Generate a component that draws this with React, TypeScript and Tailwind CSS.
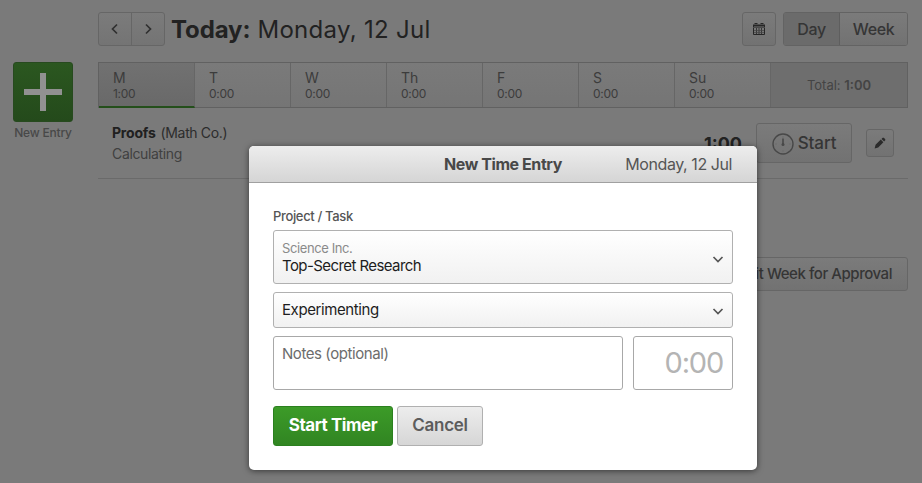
import { ReactNode } from 'react'
import clsx from 'clsx'

type TDay = { label: string; hours: string; active?: boolean }

const DAYS: TDay[] = [
  { label: 'M', hours: '1:00', active: true },
  { label: 'T', hours: '0:00' },
  { label: 'W', hours: '0:00' },
  { label: 'Th', hours: '0:00' },
  { label: 'F', hours: '0:00' },
  { label: 'S', hours: '0:00' },
  { label: 'Su', hours: '0:00' },
]

function Chevron({ d, className }: { d: string; className?: string }) {
  return (
    <svg
      viewBox="0 0 12 12"
      className={clsx('size-3', className)}
      fill="none"
      stroke="currentColor"
      strokeWidth="1.7"
    >
      <path d={d} />
    </svg>
  )
}

function CalendarIcon() {
  return (
    <svg viewBox="0 0 14 14" className="size-3.5" fill="none" stroke="#262626">
      <path d="M1.500 4v8.500h11V4" />
      <path d="M1 3.500h12" strokeWidth="2" />
      <path d="M2.500 1.500h3M8.500 1.500h3" />
      <path d="M1 5.500h12" stroke="#4a4a4a" />
      <path d="M4.500 6v6M7 6v6M9.500 6v6" strokeWidth="0.8" />
      <path d="M2 8.500h10M2 10.500h10" strokeWidth="0.7" stroke="#444" />
    </svg>
  )
}

function ClockIcon() {
  return (
    <svg viewBox="0 0 22 22" className="size-[22px]" fill="none" stroke="#484848">
      <circle cx="11" cy="11" r="10" strokeWidth="1.4" />
      <path d="M11 3v2M11 17v2M3 11h2M17 11h2" stroke="#6c6c6c" />
      <path d="M11 5.500v6" strokeWidth="1.6" />
      <circle cx="11" cy="11.500" r="1.500" fill="#484848" stroke="none" />
    </svg>
  )
}

function PencilIcon() {
  return (
    <svg viewBox="0 0 12 12" className="size-3" fill="#2b2b2b">
      <path d="M0.600 11.400l1-3.600 5.200-5.200 2.600 2.600-5.200 5.200z" />
      <path d="M7.500 1.900l.9-.9c.5-.5 1.200-.5 1.700 0l.9.9c.5.5.5 1.200 0 1.700l-.9.9z" />
    </svg>
  )
}

function DimButton({
  className,
  children,
}: {
  className?: string
  children: ReactNode
}) {
  return (
    <button
      className={clsx(
        'flex items-center rounded-[3px] border border-[#666] bg-linear-to-b from-[#7b7b7b] to-[#727272] text-[#353535]',
        className,
      )}
    >
      {children}
    </button>
  )
}

function Toolbar() {
  return (
    <div className="flex h-[34px] items-center">
      <div className="flex h-full w-[67px] divide-x divide-[#666] rounded-[3px] border border-[#666] bg-linear-to-b from-[#7b7b7b] to-[#747474] text-[#303030]">
        <button className="flex flex-1 items-center justify-center">
          <Chevron d="M8 1.500L3.500 6 8 10.500" />
        </button>
        <button className="flex flex-1 items-center justify-center">
          <Chevron d="M4 1.500L8.500 6 4 10.500" />
        </button>
      </div>
      <h1 className="mt-px ml-[6px] text-[24px] leading-none tracking-[0.3px] whitespace-nowrap text-[#222]">
        <b className="font-bold tracking-[-0.1px]">Today:</b> Monday, 12 Jul
      </h1>
      <DimButton className="ml-auto h-full w-[34px] justify-center">
        <CalendarIcon />
      </DimButton>
      <div className="ml-[7px] flex h-full w-[125px] overflow-hidden rounded-[3px] border border-[#636363] text-base font-medium tracking-[-0.4px] text-[#353535]">
        <button className="w-14 border-r border-[#5e5e5e] bg-[#6b6b6b]">
          Day
        </button>
        <button className="flex-1 bg-linear-to-b from-[#7b7b7b] to-[#727272]">
          Week
        </button>
      </div>
    </div>
  )
}

function WeekStrip() {
  return (
    <div className="mt-4 flex h-[46px] border border-[#616161] bg-linear-to-b from-[#7a7a7a] to-[#757575]">
      {DAYS.map(({ label, hours, active }) => (
        <div
          key={label}
          className={clsx(
            'w-24 shrink-0 border-r border-[#666] pt-[7px] pl-[14px] text-[#3c3c3c]',
            active && '-mb-px border-b-2 border-b-[#244f1b] bg-linear-to-b from-[#717171] to-[#696969]',
          )}
        >
          <div className="text-sm leading-4">{label}</div>
          <div className="text-xs leading-[15px] tracking-[-0.3px]">{hours}</div>
        </div>
      ))}
      <div className="flex flex-1 items-center justify-center bg-[#6e6e6e] pt-px text-[13px] text-[#444]">
        <span>
          Total: <b className="font-semibold">1:00</b>
        </span>
      </div>
    </div>
  )
}

function EntryRow() {
  return (
    <div className="flex h-[71px] items-center border-b border-[#6a6a6a] pr-[14px] pl-[14px]">
      <div className="leading-[22px]">
        <div className="text-sm tracking-[-0.35px] text-[#2c2c2c]">
          <b className="mr-[5px] font-bold tracking-[-0.2px] text-[#202020]">
            Proofs
          </b>
          (Math Co.)
        </div>
        <div className="pt-px text-sm tracking-[-0.35px] text-[#404040]">
          Calculating
        </div>
      </div>
      <b className="ml-auto text-[18px] font-bold text-[#222]">1:00</b>
      <DimButton className="ml-[14px] h-10 w-24 justify-center gap-1 pt-px text-[17px] font-medium tracking-[-0.1px]">
        <ClockIcon />
        Start
      </DimButton>
      <DimButton className="ml-[14px] size-7 justify-center">
        <PencilIcon />
      </DimButton>
    </div>
  )
}

function TimeEntryDialog() {
  return (
    <div
      role="dialog"
      className="absolute top-[146px] left-[249px] h-[324px] w-[508px] overflow-hidden rounded-[5px] bg-white shadow-[0_1px_6px_rgba(0,0,0,0.55)]"
    >
      <div className="grid h-[37px] grid-cols-[1fr_auto_1fr] items-center border-b border-[#a0a0a0] bg-linear-to-b from-[#ededed] to-[#d5d5d5] px-[25px] text-base tracking-[-0.43px] text-[#555]">
        <h2 className="col-start-2 font-bold text-[#484848]">New Time Entry</h2>
        <span className="text-right">Monday, 12 Jul</span>
      </div>
      <div className="px-6 pt-[25px]">
        <label className="block text-[13px] leading-4 font-medium tracking-[-0.35px] text-[#555]">
          Project / Task
        </label>
        <button className="mt-[6px] flex h-[54px] w-full items-center rounded-[3px] border border-[#b0b0b0] bg-linear-to-b from-white to-[#f1f1f1] px-2 text-left">
          <span className="flex-1 leading-[18px]">
            <span className="block text-[13px] tracking-[-0.4px] text-[#8a8a8a]">
              Science Inc.
            </span>
            <span className="block text-[15px] tracking-[-0.58px] text-[#1d1d1d]">
              Top-Secret Research
            </span>
          </span>
          <Chevron d="M1.500 4L6 8.500 10.500 4" className="mt-[3px] text-[#555]" />
        </button>
        <button className="mt-2 flex h-9 w-full items-center rounded-[3px] border border-[#b0b0b0] bg-linear-to-b from-white to-[#f1f1f1] px-2 text-left">
          <span className="flex-1 text-[15px] tracking-[-0.4px] text-[#1d1d1d]">
            Experimenting
          </span>
          <Chevron d="M1.500 4L6 8.500 10.500 4" className="mt-px text-[#555]" />
        </button>
        <div className="mt-2 flex h-[54px] gap-[10px]">
          <div className="flex-1 rounded-[3px] border border-[#a8a8a8] px-2 pt-[7px] text-[15px] leading-5 tracking-[-0.43px] text-[#6c6c6c]">
            Notes (optional)
          </div>
          <div className="flex w-[100px] items-center justify-end rounded-[3px] border border-[#a8a8a8] pr-[9px] text-[29px] tracking-[-1.2px] text-[#b4b4b4]">
            0:00
          </div>
        </div>
        <div className="mt-4 flex gap-1 text-[17px]">
          <button className="h-10 w-[120px] rounded-[3px] border border-[#2b801f] bg-linear-to-b from-[#3c9b28] to-[#318522] font-bold tracking-[-0.45px] text-white">
            Start Timer
          </button>
          <button className="h-10 w-[86px] rounded-[3px] border border-[#b0b0b0] bg-linear-to-b from-[#ededed] to-[#d6d6d6] font-semibold tracking-[-0.3px] text-[#5c5c5c]">
            Cancel
          </button>
        </div>
      </div>
    </div>
  )
}

export default function App() {
  return (
    <div className="relative flex h-[483px] w-[922px] overflow-hidden bg-[#7a7a7a] font-['Inter',sans-serif]">
      <aside className="flex w-[98px] flex-col pt-[62px] pl-[13px]">
        <button className="flex size-[60px] items-center justify-center rounded-[3px] border border-[#274a1f] bg-linear-to-b from-[#2b5720] to-[#244a1b]">
          <svg viewBox="0 0 38 38" className="size-[38px]" stroke="#919191" strokeWidth="6">
            <path d="M19 0v38M0 19h38" />
          </svg>
        </button>
        <span className="mt-[3px] w-[60px] text-center text-xs leading-4 font-medium tracking-[-0.2px] whitespace-nowrap text-[#484848]">
          New Entry
        </span>
      </aside>
      <main className="w-[810px] pt-3">
        <Toolbar />
        <WeekStrip />
        <EntryRow />
        <DimButton className="mt-[78px] ml-auto h-[34px] w-[208px] justify-end pr-[15px] text-[15px] font-medium tracking-[-0.45px]">
          Submit Week for Approval
        </DimButton>
      </main>
      <TimeEntryDialog />
    </div>
  )
}
